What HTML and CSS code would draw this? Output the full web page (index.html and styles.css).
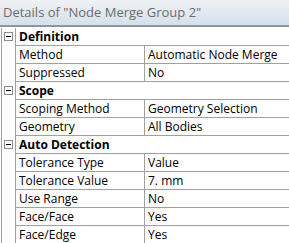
FILE: index.html
```html
<!DOCTYPE html>
<html lang="en">
<head>
    <meta charset="UTF-8">
    <title>Details</title>
    <link rel="stylesheet" href="styles.css">
</head>
<body>
    <div class="title">Details of "Node Merge Group 2"</div>
    <div class="grid">
        <div class="group">
            <div class="row head"><span class="toggle"></span><div class="name">Definition</div></div>
            <div class="row"><span class="gap"></span><div class="name">Method</div><div class="value">Automatic Node Merge</div></div>
            <div class="row"><span class="gap"></span><div class="name">Suppressed</div><div class="value">No</div></div>
        </div>
        <div class="group">
            <div class="row head"><span class="toggle"></span><div class="name">Scope</div></div>
            <div class="row"><span class="gap"></span><div class="name">Scoping Method</div><div class="value">Geometry Selection</div></div>
            <div class="row"><span class="gap"></span><div class="name">Geometry</div><div class="value">All Bodies</div></div>
        </div>
        <div class="group">
            <div class="row head"><span class="toggle"></span><div class="name">Auto Detection</div></div>
            <div class="row"><span class="gap"></span><div class="name">Tolerance Type</div><div class="value">Value</div></div>
            <div class="row"><span class="gap"></span><div class="name">Tolerance Value</div><div class="value">7. mm</div></div>
            <div class="row"><span class="gap"></span><div class="name">Use Range</div><div class="value">No</div></div>
            <div class="row"><span class="gap"></span><div class="name">Face/Face</div><div class="value">Yes</div></div>
            <div class="row"><span class="gap"></span><div class="name">Face/Edge</div><div class="value">Yes</div></div>
        </div>
    </div>
</body>
</html>
```
FILE: styles.css
```css
body {
    margin: 0;
    font-family: "Open Sans", "DejaVu Sans", sans-serif;
    font-size: 12px;
    color: #000;
    background: #fff;
}
.title {
    height: 25px;
    line-height: 25px;
    padding-left: 3px;
    font-size: 13px;
    color: #6b6b6b;
    background: linear-gradient(#eef2f7, #d6e0ea);
    border-bottom: 2px solid #8f969d;
    white-space: nowrap;
    overflow: hidden;
}
.grid {
    margin-top: 1px;
    border-left: 1px solid #a0a0a0;
    margin-left: 1px;
}
.row {
    display: flex;
    height: 18px;
    line-height: 17px;
}
.row .name,
.row .value {
    border-bottom: 1px solid #a0a0a0;
    white-space: nowrap;
    overflow: hidden;
}
.toggle,
.gap {
    width: 13px;
    flex: none;
    border-right: 1px solid #a0a0a0;
    position: relative;
}
.toggle::before {
    content: "";
    position: absolute;
    left: 2px;
    top: 4px;
    width: 7px;
    height: 7px;
    border: 1px solid #8c8c8c;
    background: #fff;
}
.toggle::after {
    content: "";
    position: absolute;
    left: 4px;
    top: 8px;
    width: 5px;
    height: 1px;
    background: #000;
}
.name {
    width: 125px;
    padding-left: 3px;
    flex: none;
    border-right: 1px solid #a0a0a0;
}
.head .name {
    flex: 1;
    border-right: none;
    font-weight: bold;
}
.value {
    flex: 1;
    padding-left: 3px;
}
```
